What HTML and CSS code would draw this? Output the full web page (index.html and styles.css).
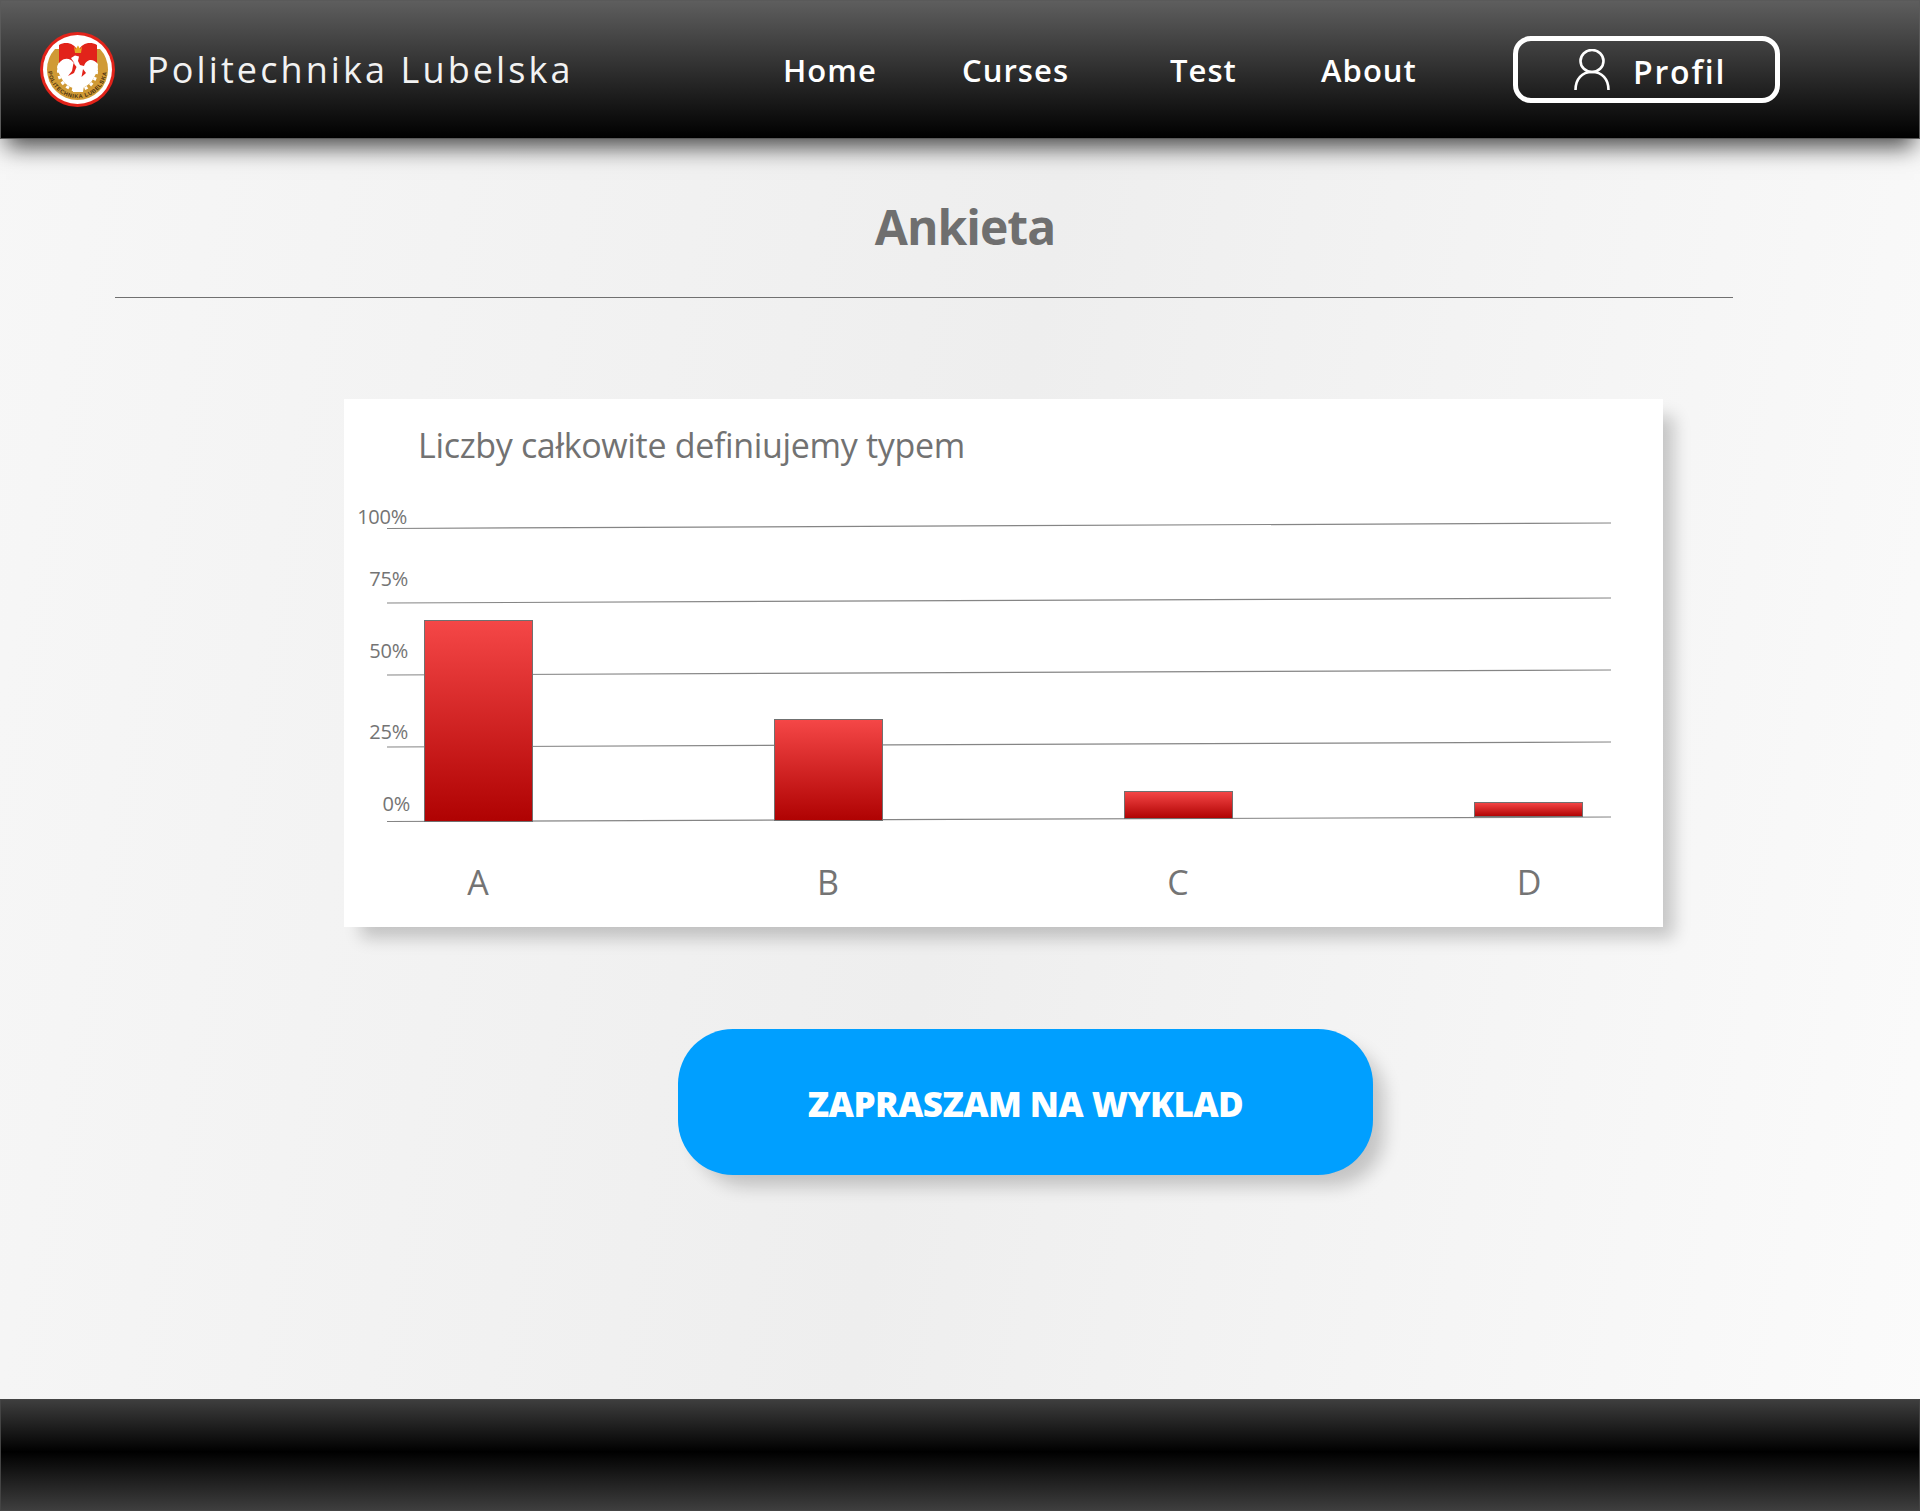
FILE: index.html
```html
<!DOCTYPE html>
<html lang="pl">
<head>
    <meta charset="UTF-8">
    <meta name="viewport" content="width=device-width, initial-scale=1.0">
    <title>Ankieta - Politechnika Lubelska</title>
    <link rel="stylesheet" href="styles.css">
</head>
<body>
    <header class="topbar">
        <a class="brand" href="#">
            <svg class="brand-logo" viewBox="0 0 75 75" aria-hidden="true">
                <circle cx="37.5" cy="37.5" r="37.5" fill="#e2231a"/>
                <circle cx="37.5" cy="37.5" r="34.5" fill="#fff"/>
                <path d="M7 37.5A30.5 30.5 0 0 0 68 37.5A30.5 30.5 0 0 0 60 17H15A30.5 30.5 0 0 0 7 37.5Z" fill="#d09a35"/>
                <circle cx="37.5" cy="39" r="17.5" fill="#fff"/>
                <circle cx="37.5" cy="39" r="19" fill="none" stroke="#fff" stroke-width="3" stroke-dasharray="3.2 3.2"/>
                <path d="M19 13C26 9 34 11 38 19C42 11 50 9 57 13V38H19Z" fill="#e2231a"/>
                <path d="M17 35C20 28 25 25 31 28L35 32L31 26L35 23.5L39 24.5L38 29L40 33L44 34C46 28 52 25 58 32C58 42 52 50 44 53L43 60H33L32 53C24 50 18 43 17 35Z" fill="#fff"/>
                <path d="M34 14.5L35.8 17L38 13.5L40.2 17L42 14.5L41 21H35Z" fill="#e6a524"/>
                <path d="M33.5 31L32 39L28 44L34 41L36.5 35Z M43 37L41.5 45L46 41Z" fill="#e2231a"/>
                <defs>
                    <path id="logo-arc" d="M9 29A29.5 29.5 0 1 0 66 29"/>
                </defs>
                <text class="logo-text">
                    <textPath href="#logo-arc" startOffset="50%" text-anchor="middle">POLITECHNIKA LUBELSKA</textPath>
                </text>
            </svg>
            <span class="brand-name">Politechnika Lubelska</span>
        </a>
        <nav class="menu">
            <a href="#">Home</a>
            <a href="#">Curses</a>
            <a href="#">Test</a>
            <a href="#">About</a>
            <a class="profile" href="#">
                <svg class="profile-icon" viewBox="0 0 36 41" aria-hidden="true">
                    <ellipse cx="18" cy="12" rx="11.5" ry="11" fill="none" stroke="#fff" stroke-width="2.6"/>
                    <path d="M1.5 41C1.5 30 8 23 18 23S34.5 30 34.5 41" fill="none" stroke="#fff" stroke-width="2.6"/>
                </svg>
                <span class="profile-name">Profil</span>
            </a>
        </nav>
    </header>

    <main class="content">
        <h1 class="page-title">Ankieta</h1>
        <hr class="title-rule">

        <section class="poll-card">
            <h2 class="question">Liczby całkowite definiujemy typem</h2>
            <svg class="chart" viewBox="0 0 1319 437" aria-label="Wyniki ankiety">
                <defs>
                    <linearGradient id="bar-red" x1="0" y1="0" x2="0" y2="1">
                        <stop offset="0" stop-color="#f54747"/>
                        <stop offset="1" stop-color="#af0202"/>
                    </linearGradient>
                </defs>

                <!-- grid lines, the source chart is very slightly tilted -->
                <line class="grid" x1="43" y1="38.5" x2="1267" y2="33"/>
                <line class="grid" x1="43" y1="113" x2="1267" y2="108"/>
                <line class="grid" x1="43" y1="185" x2="1267" y2="180"/>
                <line class="grid" x1="43" y1="257" x2="1267" y2="252"/>
                <line class="grid" x1="43" y1="331.5" x2="1267" y2="327"/>

                <text class="tick" x="63" y="34">100%</text>
                <text class="tick" x="64" y="96">75%</text>
                <text class="tick" x="64" y="168">50%</text>
                <text class="tick" x="64" y="249">25%</text>
                <text class="tick" x="66" y="321">0%</text>

                <rect class="bar" x="80.5" y="130.5" width="108" height="201"/>
                <rect class="bar" x="430.5" y="229.5" width="108" height="101"/>
                <rect class="bar" x="780.5" y="301.5" width="108" height="27"/>
                <rect class="bar" x="1130.5" y="312.5" width="108" height="14"/>

                <text class="answer" x="134" y="405">A</text>
                <text class="answer" x="484" y="405">B</text>
                <text class="answer" x="834" y="405">C</text>
                <text class="answer" x="1185" y="405">D</text>
            </svg>
        </section>

        <a class="lecture-btn" href="#">ZAPRASZAM NA WYKLAD</a>
    </main>

    <footer class="bottombar"></footer>
</body>
</html>
```

FILE: styles.css
```css
* {
    box-sizing: border-box;
}
body {
    margin: 0;
    height: 1511px;
    display: flex;
    flex-direction: column;
    overflow: hidden;
    font-family: "Open Sans", "Noto Sans", sans-serif;
    background: linear-gradient(100deg, #f7f7f7 0%, #eeeeee 50%, #fbfbfb 100%);
}
a {
    color: inherit;
    text-decoration: none;
}

/* top bar */
.topbar {
    position: relative;
    z-index: 1;
    flex: none;
    height: 139px;
    display: flex;
    align-items: center;
    padding-left: 39px;
    color: #fff;
    background: linear-gradient(#5e5e5e, #000);
    border: 1px solid #5a5a5a;
    box-shadow: 0 14px 22px -6px rgba(0, 0, 0, 0.7);
}
.brand {
    width: 744px;
    display: flex;
    align-items: center;
    gap: 32px;
}
.brand-logo {
    width: 75px;
    height: 75px;
    flex: none;
}
.logo-text {
    font-family: "Liberation Sans", sans-serif;
    font-size: 5.6px;
    font-weight: 700;
    letter-spacing: 0.6px;
    fill: #4a2f10;
}
.brand-name {
    font-size: 36px;
    font-weight: 500;
    letter-spacing: 3.1px;
    color: #f2f2f2;
    white-space: nowrap;
}
.menu {
    display: grid;
    grid-template-columns: 179px 208px 151px 192px 267px;
    align-items: center;
    margin-left: -1px;
    font-size: 31px;
    font-weight: 600;
    letter-spacing: 1.05px;
}
.profile {
    height: 67px;
    display: flex;
    align-items: center;
    gap: 23px;
    padding-left: 56px;
    border: 5px solid #fff;
    border-radius: 18px;
}
.profile-icon {
    width: 36px;
    height: 41px;
}
.profile-name {
    padding-top: 3px;
    font-size: 32px;
    letter-spacing: 1.8px;
}

/* main part */
.content {
    flex: 1;
    display: flex;
    flex-direction: column;
    align-items: flex-start;
}
.page-title {
    width: 100%;
    margin: 54px 0 0;
    padding-left: 10px;
    text-align: center;
    font-size: 48px;
    font-weight: 700;
    letter-spacing: -1px;
    line-height: 68px;
    color: #6f6f6f;
}
.title-rule {
    width: 1618px;
    margin: 36px 0 0 115px;
    border: none;
    border-top: 1px solid #707070;
}
.poll-card {
    width: 1319px;
    height: 528px;
    margin: 101px 0 0 344px;
    background: #fff;
    box-shadow: 14px 14px 16px -3px rgba(0, 0, 0, 0.2);
}
.question {
    height: 91px;
    margin: 0;
    padding: 23px 0 0 74px;
    font-size: 34px;
    font-weight: 400;
    letter-spacing: -0.33px;
    line-height: 46px;
    color: #727272;
}
.chart {
    display: block;
    width: 1319px;
    height: 437px;
}
.grid {
    stroke: #858585;
    stroke-width: 1.2;
}
.tick {
    font-size: 20px;
    font-weight: 400;
    letter-spacing: -0.25px;
    text-anchor: end;
    fill: #747474;
}
.answer {
    font-size: 34px;
    font-weight: 400;
    text-anchor: middle;
    fill: #747474;
}
.bar {
    fill: url(#bar-red);
    stroke: #707070;
    stroke-width: 1;
}
.lecture-btn {
    width: 695px;
    height: 146px;
    margin: 102px 0 0 678px;
    padding-top: 3px;
    display: flex;
    align-items: center;
    justify-content: center;
    border-radius: 55px;
    background: #009fff;
    color: #fff;
    font-size: 35px;
    font-weight: 800;
    letter-spacing: -0.6px;
    box-shadow: 14px 14px 18px -3px rgba(0, 0, 0, 0.2);
}

/* bottom bar */
.bottombar {
    flex: none;
    height: 112px;
    background: linear-gradient(#3e3e3e, #000 47%, #3e3e3e);
    border: 1px solid #444;
}
```
